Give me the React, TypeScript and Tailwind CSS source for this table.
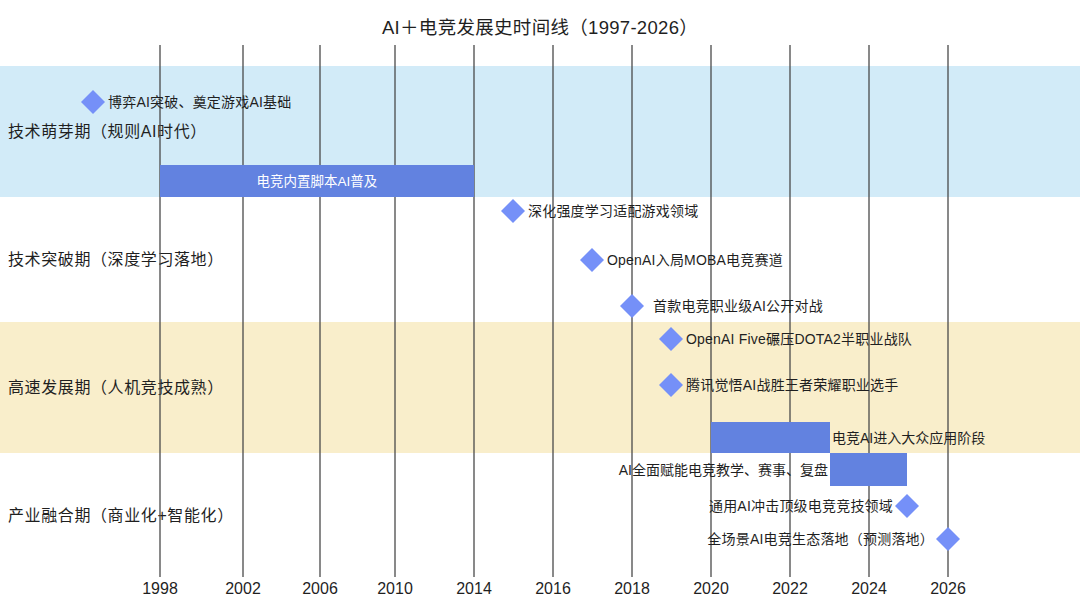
import React from "react";

const FONT = '"Liberation Sans", "Noto Sans CJK SC", sans-serif';

const ticks: Array<[string, number]> = [
  ["1998", 160],
  ["2002", 243],
  ["2006", 320],
  ["2010", 395],
  ["2014", 474],
  ["2016", 553],
  ["2018", 632],
  ["2020", 711],
  ["2022", 790],
  ["2024", 869],
  ["2026", 948],
];

const bands = [
  { label: "技术萌芽期（规则AI时代）", cls: "h-[131px] bg-[#d2ebf8]" },
  { label: "技术突破期（深度学习落地）", cls: "h-[125px] bg-white" },
  { label: "高速发展期（人机竞技成熟）", cls: "h-[131px] bg-[#f9eecb]" },
  { label: "产业融合期（商业化+智能化）", cls: "h-[126px] bg-white" },
];

// milestones: x, y, label, which side the label sits on
const milestones: Array<{ x: number; y: number; text: string; side: "r" | "l"; gap?: number }> = [
  { x: 93, y: 102, text: "博弈AI突破、奠定游戏AI基础", side: "r" },
  { x: 513, y: 211, text: "深化强度学习适配游戏领域", side: "r" },
  { x: 592, y: 260, text: "OpenAI入局MOBA电竞赛道", side: "r" },
  { x: 632, y: 306, text: "首款电竞职业级AI公开对战", side: "r", gap: 21 },
  { x: 671, y: 339, text: "OpenAI Five碾压DOTA2半职业战队", side: "r" },
  { x: 671, y: 385, text: "腾讯觉悟AI战胜王者荣耀职业选手", side: "r" },
  { x: 907, y: 506, text: "通用AI冲击顶级电竞竞技领域", side: "l" },
  { x: 948, y: 539, text: "全场景AI电竞生态落地（预测落地）", side: "l" },
];

function Diamond({ x, y }: { x: number; y: number }) {
  const r = 12;
  return <polygon points={`${x},${y - r} ${x + r},${y} ${x},${y + r} ${x - r},${y}`} fill="#7590f8" />;
}

function Chart() {
  return (
    <svg className="absolute inset-0" width={1080} height={610} style={{ fontFamily: FONT }}>
      {ticks.map(([year, x]) => (
        <g key={year}>
          <line x1={x} y1={45} x2={x} y2={577} stroke="#4a4a4a" strokeWidth={1.3} />
          <text x={x} y={594} textAnchor="middle" fontSize={16} fill="#1f1f1f">
            {year}
          </text>
        </g>
      ))}

      <rect x={160} y={165} width={314} height={32} fill="#6282e0" />
      <text x={317} y={186} textAnchor="middle" fontSize={13.5} fill="#ffffff">
        电竞内置脚本AI普及
      </text>

      <rect x={711} y={422} width={119} height={31} fill="#6282e0" />
      <text x={832} y={443} fontSize={14} fill="#1f1f1f">
        电竞AI进入大众应用阶段
      </text>

      <rect x={830} y={453} width={77} height={33} fill="#6282e0" />
      <text x={828} y={475} textAnchor="end" fontSize={14} fill="#1f1f1f">
        AI全面赋能电竞教学、赛事、复盘
      </text>

      {milestones.map((m) => (
        <g key={m.text}>
          <Diamond x={m.x} y={m.y} />
          <text
            x={m.side === "r" ? m.x + (m.gap ?? 15) : m.x - 14}
            y={m.y + 5}
            textAnchor={m.side === "r" ? "start" : "end"}
            fontSize={14}
            letterSpacing={0.2}
            fill="#1f1f1f"
          >
            {m.text}
          </text>
        </g>
      ))}
    </svg>
  );
}

export default function App() {
  return (
    <div className="relative w-[1080px] h-[610px] overflow-hidden bg-white text-[#1f1f1f]" style={{ fontFamily: FONT }}>
      <div className="h-[66px] pt-[16px] text-center text-[18.5px] leading-[24px] tracking-[0.3px]">
        AI＋电竞发展史时间线（1997-2026）
      </div>
      <div className="flex flex-col">
        {bands.map((b) => (
          <div key={b.label} className={`flex items-center pl-[8px] text-[16px] tracking-[0.6px] ${b.cls}`}>
            {b.label}
          </div>
        ))}
      </div>
      <Chart />
    </div>
  );
}
